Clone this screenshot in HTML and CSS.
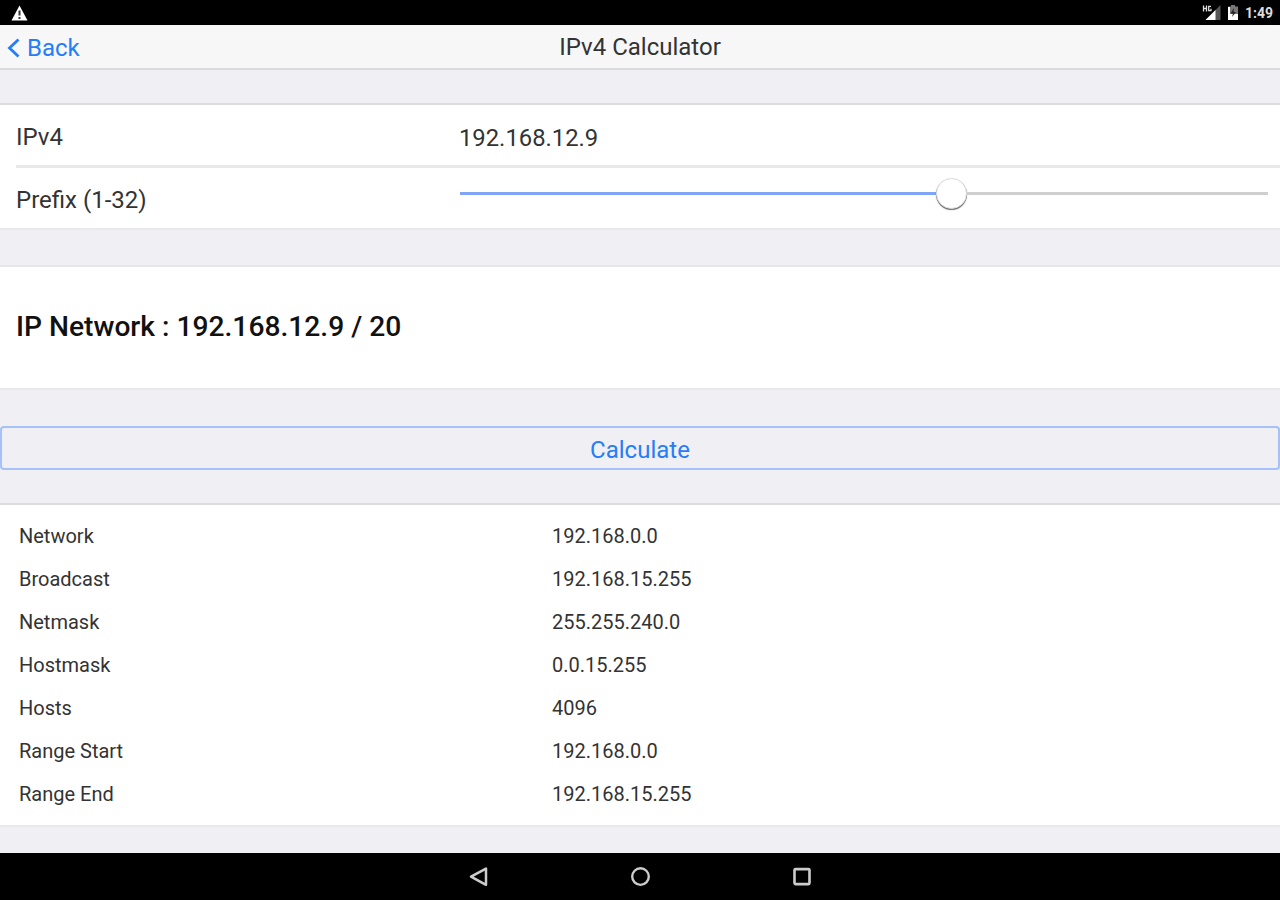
FILE: index.html
```html
<!DOCTYPE html>
<html lang="en">
<head>
    <meta charset="UTF-8">
    <meta name="viewport" content="width=device-width, initial-scale=1.0">
    <title>IPv4 Calculator</title>
    <link rel="stylesheet" href="styles.css">
</head>
<body>
    <div class="status-bar">
        <svg class="warning-icon" width="17" height="16" viewBox="0 0 17 16">
            <path d="M8.5 0.5L16.5 15.5H0.5Z" fill="#fff"/>
            <path d="M8.5 5.5V10.5M8.5 12V14" stroke="#333" stroke-width="2"/>
        </svg>
        <div class="status-right">
            <svg width="20" height="16" viewBox="0 0 20 16">
                <path d="M18.5 0V15H3.5Z" fill="#555"/>
                <path d="M13.5 5V15H3.5Z" fill="#fff"/>
                <path d="M1.5 0.5V6.5M4.5 0.5V6.5M1.5 3.5H4.5M9 1.3H6.7V5.7H9V3.7" fill="none" stroke="#ddd" stroke-width="1.3"/>
            </svg>
            <svg class="battery-icon" width="10" height="15" viewBox="0 0 10 15">
                <path d="M3 0H7V1.5H10V15H0V1.5H3Z" fill="#777"/>
                <path d="M0 9H10V15H0ZM0 2H2V10H0Z" fill="#fff"/>
                <path d="M6 3L2.5 8.5H5L4 12L8 7H5.5Z" fill="#222"/>
            </svg>
            <span class="clock">1:49</span>
        </div>
    </div>

    <header class="navbar">
        <a class="back" href="#">
            <svg width="13" height="20" viewBox="0 0 13 20">
                <path d="M11.5 1.5L2.5 10L11.5 18.5" fill="none" stroke="#267df8" stroke-width="2.8"/>
            </svg>
            <span>Back</span>
        </a>
        <h1>IPv4 Calculator</h1>
    </header>

    <main>
        <div class="list">
            <div class="row">
                <label>IPv4</label>
                <div class="value">192.168.12.9</div>
            </div>
            <div class="row row-range">
                <label>Prefix (1-32)</label>
                <div class="range">
                    <div class="range-fill"></div>
                    <div class="range-knob"></div>
                    <div class="range-rest"></div>
                </div>
            </div>
        </div>

        <div class="list summary">
            <h2>IP Network : 192.168.12.9 / 20</h2>
        </div>

        <button class="calculate" type="button">Calculate</button>

        <div class="list results">
            <div class="result"><span>Network</span><span>192.168.0.0</span></div>
            <div class="result"><span>Broadcast</span><span>192.168.15.255</span></div>
            <div class="result"><span>Netmask</span><span>255.255.240.0</span></div>
            <div class="result"><span>Hostmask</span><span>0.0.15.255</span></div>
            <div class="result"><span>Hosts</span><span>4096</span></div>
            <div class="result"><span>Range Start</span><span>192.168.0.0</span></div>
            <div class="result"><span>Range End</span><span>192.168.15.255</span></div>
        </div>
    </main>

    <footer class="system-nav">
        <svg width="22" height="22" viewBox="0 0 22 22">
            <path d="M19 2.6V18.8L4 10.7Z" fill="none" stroke="#ccc" stroke-width="2.5" stroke-linejoin="round"/>
        </svg>
        <svg width="22" height="22" viewBox="0 0 22 22">
            <circle cx="11.5" cy="10.6" r="8.3" fill="none" stroke="#ccc" stroke-width="2.4"/>
        </svg>
        <svg width="22" height="22" viewBox="0 0 22 22">
            <rect x="3.5" y="3.1" width="15" height="15" rx="1" fill="none" stroke="#ccc" stroke-width="2.6"/>
        </svg>
    </footer>
</body>
</html>
```

FILE: styles.css
```css
* {
    box-sizing: border-box;
}

body {
    margin: 0;
    height: 900px;
    display: flex;
    flex-direction: column;
    background-color: #efeff4;
    color: #333;
    font-family: Roboto, sans-serif;
    font-size: 24px;
    overflow: hidden;
}

svg {
    display: block;
}

.status-bar {
    height: 25px;
    padding: 0 7px 0 11px;
    display: flex;
    align-items: center;
    justify-content: space-between;
    background-color: #000;
    color: #ddd;
}

.status-right {
    display: flex;
    align-items: center;
}

.battery-icon {
    margin-left: 6px;
}

.clock {
    margin-left: 7px;
    font-size: 14px;
    font-weight: 700;
    line-height: 24px;
}

.navbar {
    height: 45px;
    display: grid;
    grid-template-columns: 1fr auto 1fr;
    align-items: center;
    background-color: #f7f7f8;
    border-bottom: 2px solid #dadadd;
}

.navbar h1 {
    margin: 0;
    padding-top: 2px;
    font-size: 24px;
    font-weight: 400;
    line-height: 41px;
}

.back {
    display: flex;
    align-items: center;
    gap: 7px;
    padding: 2px 0 0 7px;
    color: #267df8;
    text-decoration: none;
}

main {
    flex: 1;
}

.list {
    margin-top: 33px;
    background-color: #fff;
    border-top: 2px solid #dcdcdf;
    border-bottom: 2px solid #e9e9eb;
}

.row {
    height: 63px;
    margin-left: 16px;
    display: grid;
    grid-template-columns: 443px 1fr;
    align-items: center;
    border-bottom: 3px solid #e9e9e9;
}

.row-range {
    height: 60px;
    grid-template-columns: 444px 1fr;
    padding-right: 12px;
    border-bottom: 0;
}

.row label {
    padding-top: 3px;
}

.value {
    padding-top: 6px;
    font-size: 23.8px;
}

.range {
    display: flex;
    align-items: center;
    padding-bottom: 9px;
}

.range-fill {
    width: 476px;
    height: 3px;
    background-color: #7fa5f8;
}

.range-knob {
    width: 31px;
    height: 31px;
    background-color: #fff;
    border: 1px solid #ddd;
    border-radius: 50%;
    box-shadow: 0 1px 1px rgba(0, 0, 0, 0.6);
}

.range-rest {
    flex: 1;
    height: 3px;
    background-color: #cfcfcf;
}

.summary {
    height: 125px;
    margin-top: 35px;
    padding: 0 0 2px 16px;
    display: flex;
    align-items: center;
    border-top-color: #e6e6e9;
}

.summary h2 {
    margin: 0;
    color: #111;
    font-size: 28.2px;
    font-weight: 500;
}

.calculate {
    display: block;
    width: 100%;
    height: 44px;
    margin-top: 36px;
    padding: 4px 0 0;
    border: 2px solid #a5c1f7;
    border-radius: 4px;
    background-color: transparent;
    color: #267df8;
    font-family: inherit;
    font-size: 24px;
}

.results {
    height: 324px;
    padding: 9px 0 0 19px;
    font-size: 20px;
}

.result {
    height: 43px;
    display: grid;
    grid-template-columns: 533px 1fr;
    align-items: center;
}

.system-nav {
    height: 47px;
    display: flex;
    align-items: center;
    justify-content: center;
    gap: 140px;
    background-color: #000;
}
```
